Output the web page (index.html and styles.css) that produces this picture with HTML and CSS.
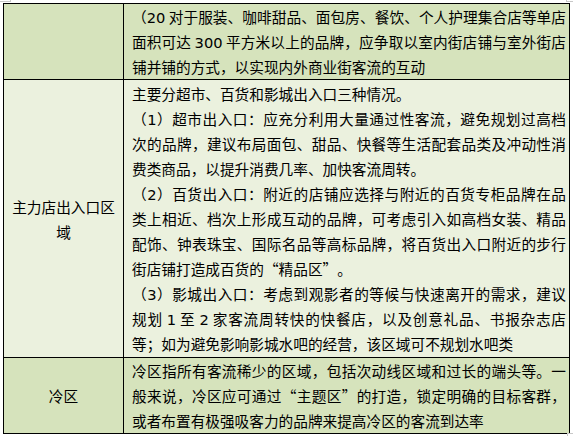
FILE: index.html
```html
<!DOCTYPE html>
<html lang="zh-CN">
<head>
<meta charset="utf-8">
<title>商业街分区</title>
<link rel="stylesheet" href="styles.css">
</head>
<body>
<div class="sheet">
  <div class="grid">
    <div class="cell label dark"></div>
    <div class="cell content dark">
      <p class="para">
        <span class="ln">（<span class="n">20</span> 对于服装、咖啡甜品、面包房、餐饮、个人护理集合店等单店</span>
        <span class="ln">面积可达 <span class="n">300</span> 平方米以上的品牌，应争取以室内街店铺与室外街店</span>
        <span class="ln end">铺并铺的方式，以实现内外商业街客流的互动</span>
      </p>
    </div>

    <div class="cell label light">主力店出入口区域</div>
    <div class="cell content light mid">
      <p class="para"><span class="ln end">主要分超市、百货和影城出入口三种情况。</span></p>
      <p class="para">
        <span class="ln">（<span class="n">1</span>）超市出入口：应充分利用大量通过性客流，避免规划过高档</span>
        <span class="ln">次的品牌，建议布局面包、甜品、快餐等生活配套品类及冲动性消</span>
        <span class="ln end">费类商品，以提升消费几率、加快客流周转。</span>
      </p>
      <p class="para">
        <span class="ln">（<span class="n">2</span>）百货出入口：附近的店铺应选择与附近的百货专柜品牌在品</span>
        <span class="ln">类上相近、档次上形成互动的品牌，可考虑引入如高档女装、精品</span>
        <span class="ln">配饰、钟表珠宝、国际名品等高标品牌，将百货出入口附近的步行</span>
        <span class="ln end">街店铺打造成百货的“精品区”。</span>
      </p>
      <p class="para">
        <span class="ln">（<span class="n">3</span>）影城出入口：考虑到观影者的等候与快速离开的需求，建议</span>
        <span class="ln">规划 <span class="n">1</span> 至 <span class="n">2</span> 家客流周转快的快餐店，以及创意礼品、书报杂志店</span>
        <span class="ln end">等；如为避免影响影城水吧的经营，该区域可不规划水吧类</span>
      </p>
    </div>

    <div class="cell label dark">冷区</div>
    <div class="cell content dark">
      <p class="para">
        <span class="ln">冷区指所有客流稀少的区域，包括次动线区域和过长的端头等。一</span>
        <span class="ln">般来说，冷区应可通过“主题区”的打造，锁定明确的目标客群，</span>
        <span class="ln end">或者布置有极强吸客力的品牌来提高冷区的客流到达率</span>
      </p>
    </div>
  </div>

  <span class="mark mark-tl"></span>
  <span class="mark mark-tr"></span>
  <span class="mark mark-br"></span>
</div>
</body>
</html>
```

FILE: styles.css
```css
html, body {
  margin: 0;
  padding: 0;
  background: #ffffff;
}

body {
  font-family: "Noto Sans CJK SC", "Noto Sans", sans-serif;
  font-size: 14.67px;
  line-height: 25px;
  color: #000000;
  text-spacing-trim: space-all;
}

.sheet {
  position: relative;
  width: 573px;
  height: 436px;
  overflow: hidden;
}

.grid {
  display: grid;
  grid-template-columns: 120px 446px;
  width: max-content;
  margin: 3px 0 0 3px;
  border-top: 1px solid #000000;
  border-left: 1px solid #000000;
}

.cell {
  border-right: 1px solid #000000;
  border-bottom: 1px solid #000000;
}

.dark {
  background: #d6e3bc;
}

.light {
  background: #ebf1de;
}

.label {
  display: flex;
  align-items: center;
  justify-content: center;
  text-align: center;
  padding: 0 5px;
}

.content {
  padding: 0 3px 0 8px;
}

.content.mid {
  padding-top: 1px;
  padding-bottom: 1px;
}

.para {
  margin: 0;
}

.ln {
  display: block;
  height: 25px;
  text-align: justify;
  text-align-last: justify;
}

.ln.end {
  text-align-last: left;
}

.n {
  font-family: "DejaVu Sans", "Liberation Sans", sans-serif;
  line-height: 1;
}

.mark {
  position: absolute;
  border-color: #c8c8c8;
  border-style: solid;
}

.mark-tl {
  left: 0;
  top: -1px;
  width: 10px;
  height: 2px;
  border-width: 0 1px 1px 0;
}

.mark-tr {
  left: 566px;
  top: -1px;
  width: 8px;
  height: 2px;
  border-width: 0 0 1px 1px;
}

.mark-br {
  left: 567px;
  top: 433px;
  width: 8px;
  height: 4px;
  border-width: 1px 0 0 1px;
}
```
